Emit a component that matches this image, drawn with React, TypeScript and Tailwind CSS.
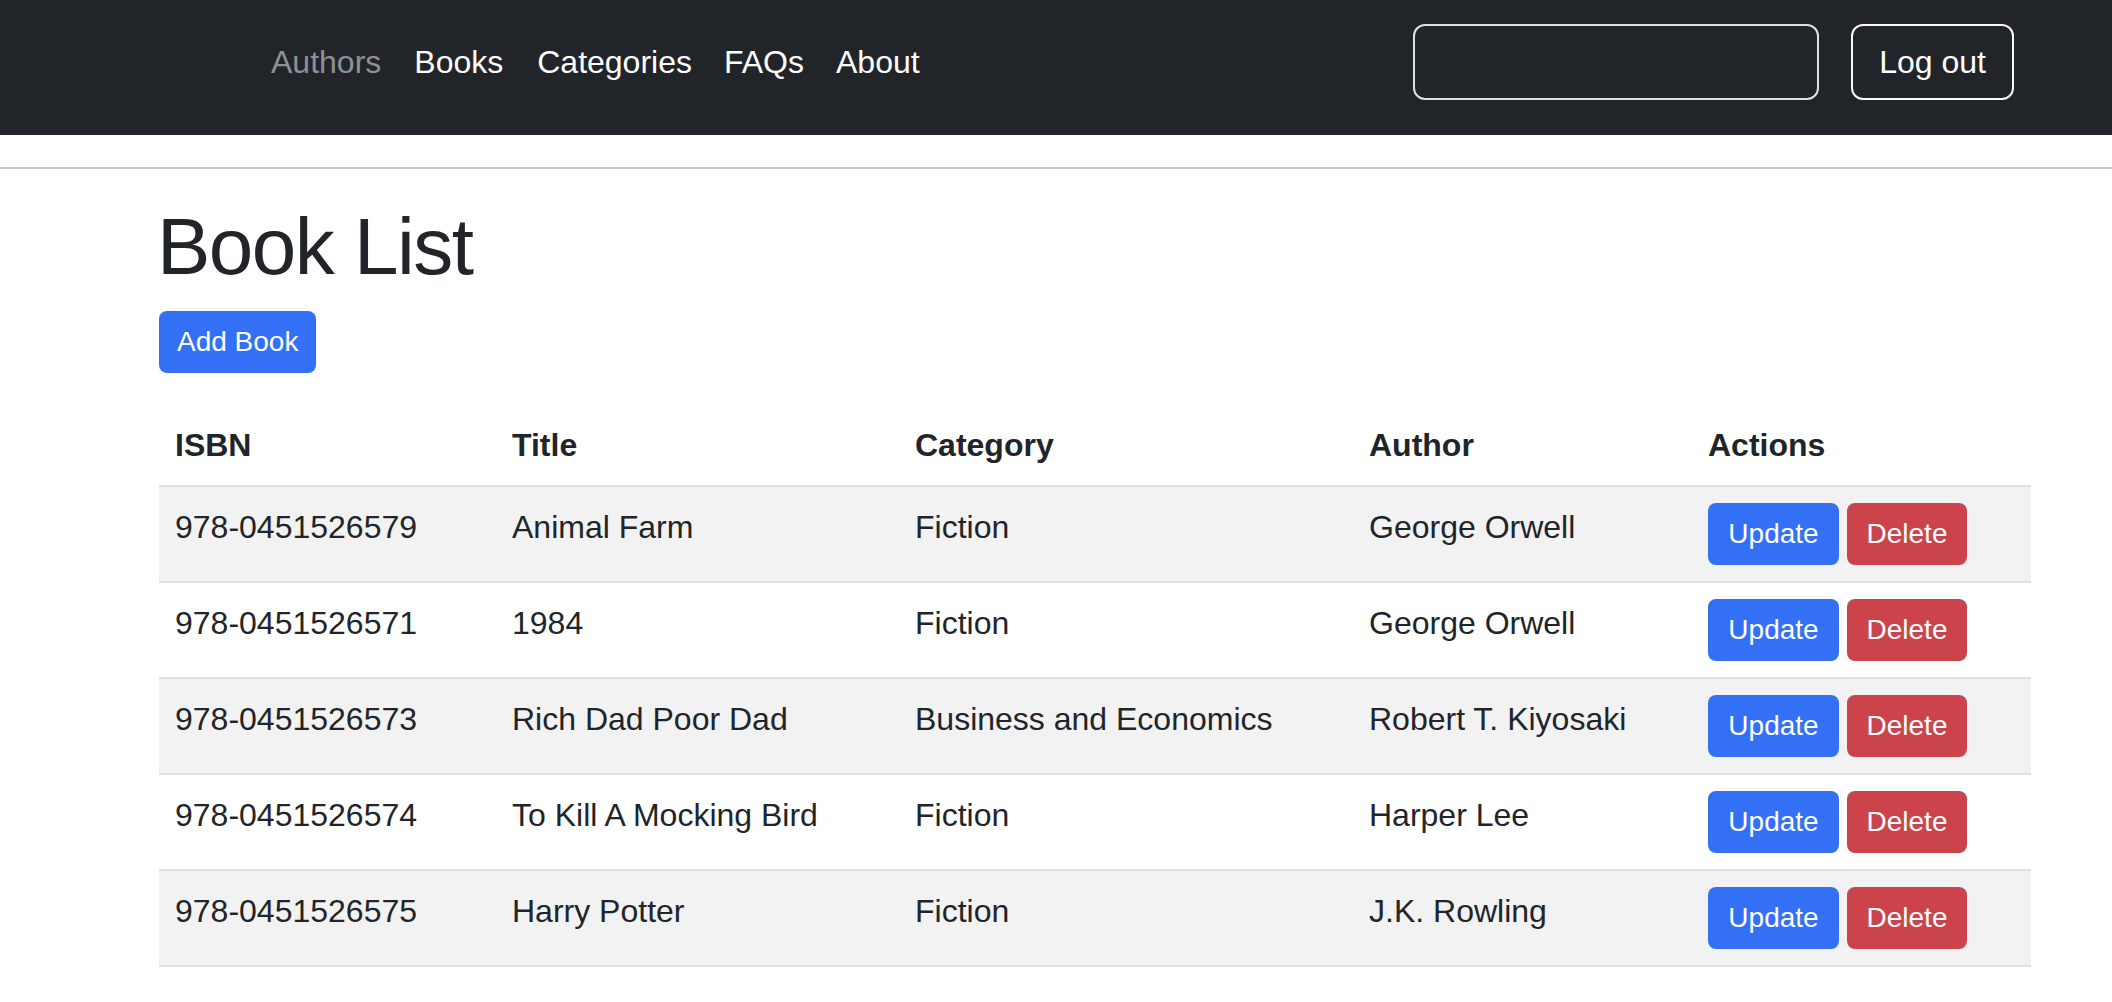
import React from 'react';

const books = [
  { isbn: '978-0451526579', title: 'Animal Farm', category: 'Fiction', author: 'George Orwell' },
  { isbn: '978-0451526571', title: '1984', category: 'Fiction', author: 'George Orwell' },
  { isbn: '978-0451526573', title: 'Rich Dad Poor Dad', category: 'Business and Economics', author: 'Robert T. Kiyosaki' },
  { isbn: '978-0451526574', title: 'To Kill A Mocking Bird', category: 'Fiction', author: 'Harper Lee' },
  { isbn: '978-0451526575', title: 'Harry Potter', category: 'Fiction', author: 'J.K. Rowling' },
];

const App: React.FC = () => {
  return (
    <div className="min-h-screen bg-white text-[#212529] font-['Liberation_Sans',Arial,sans-serif] text-[32px] leading-[48px]">
      {/* Navbar */}
      <nav className="h-[135px] bg-[#212529] flex items-start pt-[24px] pl-[255px] pr-[98px]">
        <ul className="flex items-center h-[76px]">
          <li><a href="#" className="px-[16px] text-[#8e9194]">Authors</a></li>
          <li><a href="#" className="px-[17px] text-white">Books</a></li>
          <li><a href="#" className="pl-[17px] pr-[16px] text-white">Categories</a></li>
          <li><a href="#" className="px-[16px] text-white">FAQs</a></li>
          <li><a href="#" className="px-[16px] text-white">About</a></li>
        </ul>
        <div className="ml-auto flex items-center gap-[32px]">
          <input
            type="text"
            className="w-[406px] h-[76px] rounded-[12px] border-2 border-[#dee2e6] bg-transparent px-[24px] text-white outline-none"
          />
          <button className="h-[76px] px-[26px] rounded-[12px] border-2 border-[#f8f9fa] text-white">
            Log out
          </button>
        </div>
      </nav>

      <hr className="mt-[32px] border-0 border-t-2 border-[#c8c9ca]" />

      <div className="mt-[30px] pl-[159px] pr-[82px]">
        <h1 className="text-[80px] leading-[96px] font-medium tracking-[-1.5px] mb-[16px] -ml-[2px]">Book List</h1>
        <button className="h-[62px] px-[18px] rounded-[8px] bg-[#3370f5] text-white text-[28px] leading-[42px] mb-[32px]">
          Add Book
        </button>

        <table className="w-[1872px] border-collapse">
          <thead>
            <tr className="border-b-2 border-[#dee2e6]">
              <th className="w-[337px] p-[16px] text-left font-bold">ISBN</th>
              <th className="w-[403px] p-[16px] text-left font-bold">Title</th>
              <th className="w-[454px] p-[16px] text-left font-bold">Category</th>
              <th className="w-[339px] p-[16px] text-left font-bold">Author</th>
              <th className="w-[339px] p-[16px] text-left font-bold">Actions</th>
            </tr>
          </thead>
          <tbody>
            {books.map((b, i) => (
              <tr key={b.isbn} className={`border-b-2 border-[#dee2e6] ${i % 2 === 0 ? 'bg-[#f2f2f2]' : 'bg-white'}`}>
                <td className="px-[16px] pt-[16px] pb-[30px] align-top">{b.isbn}</td>
                <td className="px-[16px] pt-[16px] pb-[30px] align-top">{b.title}</td>
                <td className="px-[16px] pt-[16px] pb-[30px] align-top">{b.category}</td>
                <td className="px-[16px] pt-[16px] pb-[30px] align-top">{b.author}</td>
                <td className="px-[16px] py-[16px] align-top">
                  <div className="flex gap-[8px]">
                    <button className="w-[131px] h-[62px] rounded-[8px] bg-[#3370f5] text-white text-[28px] leading-[42px]">
                      Update
                    </button>
                    <button className="w-[120px] h-[62px] rounded-[8px] bg-[#cb444b] text-white text-[28px] leading-[42px]">
                      Delete
                    </button>
                  </div>
                </td>
              </tr>
            ))}
          </tbody>
        </table>
      </div>
    </div>
  );
};

export default App;
